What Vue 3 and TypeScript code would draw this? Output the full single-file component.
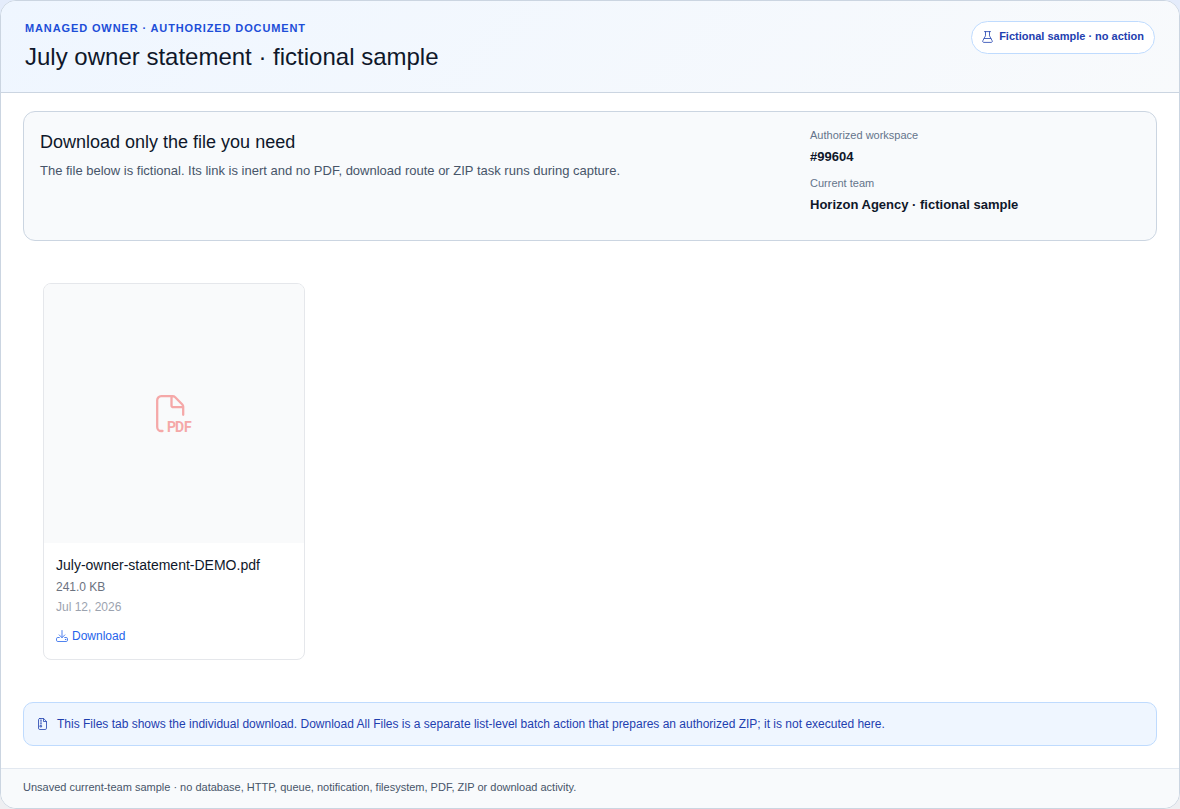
<script setup lang="ts">
interface OwnerFile {
  name: string
  size: string
  date: string
}

interface Detail {
  label: string
  value: string
}

const details: Detail[] = [
  { label: 'Authorized workspace', value: '#99604' },
  { label: 'Current team', value: 'Horizon Agency · fictional sample' },
]

const files: OwnerFile[] = [
  { name: 'July-owner-statement-DEMO.pdf', size: '241.0 KB', date: 'Jul 12, 2026' },
]
</script>

<template>
  <main class="shell">
    <header class="top">
      <div>
        <p class="eyebrow">Managed owner · Authorized document</p>
        <h1>July owner statement · fictional sample</h1>
      </div>
      <span class="badge">
        <svg class="badge-icon" viewBox="0 0 11 12" aria-hidden="true">
          <path d="M2.500 .6h6M3.500 .8v4L.9 9.600c-.6 1 .1 1.800 1 1.800h7.200c.9 0 1.600-.8 1-1.800L7.500 4.800v-4M2.200 7.500h6.600" />
        </svg>
        Fictional sample · no action
      </span>
    </header>

    <div class="content">
      <section class="summary">
        <div>
          <h2>Download only the file you need</h2>
          <p class="lead">The file below is fictional. Its link is inert and no PDF, download route or ZIP task runs during capture.</p>
        </div>
        <dl class="details">
          <template v-for="detail in details" :key="detail.label">
            <dt>{{ detail.label }}</dt>
            <dd>{{ detail.value }}</dd>
          </template>
        </dl>
      </section>

      <section class="files" aria-label="Files">
        <article v-for="file in files" :key="file.name" class="file">
          <div class="preview">
            <svg class="pdf-icon" viewBox="0 0 36 38" aria-hidden="true">
              <path d="M6.500 36H5.200a4 4 0 0 1-4-4V5.200a4 4 0 0 1 4-4h11.400c1 0 1.900.4 2.600 1.100l6.900 6.900c.7.7 1.100 1.600 1.100 2.600v8M15.500 1.400v8.800a2 2 0 0 0 2 2h9.300" />
              <text y="37"><tspan x="11">P</tspan><tspan x="19">D</tspan><tspan x="28">F</tspan></text>
            </svg>
          </div>
          <div class="info">
            <h3>{{ file.name }}</h3>
            <p class="size">{{ file.size }}</p>
            <p class="date">{{ file.date }}</p>
            <a class="download" href="#" @click.prevent>
              <svg class="download-icon" viewBox="0 0 12 12" aria-hidden="true">
                <path d="M6 .5v7M3.200 4.900 6 7.700l2.800-2.800M3.300 7.500H1.800C1 7.500.5 8 .5 8.700v1.600c0 .7.5 1.200 1.300 1.200h8.400c.8 0 1.300-.5 1.300-1.200V8.700c0-.7-.5-1.200-1.300-1.200H8.700" />
                <circle cx="9.500" cy="9.500" r=".2" />
              </svg>
              Download
            </a>
          </div>
        </article>
      </section>

      <p class="notice">
        <svg class="zip-icon" viewBox="0 0 9 12" aria-hidden="true">
          <path d="M1.800 .5h3.800L8.500 3.400v6.800c0 .8-.5 1.300-1.300 1.300H1.800C1 11.500.5 11 .5 10.200V1.800C.5 1 1 .5 1.800.5zM5.500 .7v2.800h2.800" />
          <path d="M2.300 2.200h1.300M2.300 4h1.300M2.300 5.800h1.300M2.300 7.600h1.300v1.300H2.300z" />
        </svg>
        This Files tab shows the individual download. Download All Files is a separate list-level batch action that prepares an authorized ZIP; it is not executed here.
      </p>
    </div>

    <footer class="foot">Unsaved current-team sample · no database, HTTP, queue, notification, filesystem, PDF, ZIP or download activity.</footer>
  </main>
</template>

<style>
body {
  margin: 0;
  background: linear-gradient(#e4ecfb, #eeeff2);
}
</style>

<style scoped>
* {
  box-sizing: border-box;
}

.shell {
  display: flex;
  flex-direction: column;
  min-height: 100vh;
  overflow: hidden;
  border: 1px solid #cbd5e1;
  border-radius: 16px;
  background: #fff;
  color: #0f172a;
  font-family: "Liberation Sans", Arial, sans-serif;
}

h1,
h2,
h3,
p,
dl,
dd {
  margin: 0;
  font-weight: 400;
}

svg {
  flex: none;
  fill: none;
  stroke: currentColor;
  stroke-linecap: round;
  stroke-linejoin: round;
  stroke-width: 0.8;
}

.top {
  display: flex;
  align-items: flex-start;
  justify-content: space-between;
  gap: 24px;
  padding: 20px 24px;
  border-bottom: 1px solid #cbd5e1;
  background: linear-gradient(135deg, #eff6ff, #f8fafc);
}

.eyebrow {
  color: #1d4ed8;
  font-size: 11px;
  font-weight: 700;
  line-height: 14px;
  letter-spacing: 0.08em;
  text-transform: uppercase;
}

h1 {
  margin-top: 7px;
  font-size: 24px;
  line-height: 30px;
}

.badge {
  display: flex;
  align-items: center;
  gap: 6px;
  padding: 7px 10px 9px;
  border: 1px solid #bfdbfe;
  border-radius: 20px;
  background: #fff;
  color: #1e40af;
  font-size: 11px;
  font-weight: 700;
  line-height: 15px;
  white-space: nowrap;
}

.badge-icon {
  width: 11px;
  height: 12px;
}

.content {
  flex: 1;
  padding: 18px 22px 22px;
}

.summary {
  display: grid;
  grid-template-columns: 7fr 3fr;
  min-height: 130px;
  padding: 15px 16px;
  border: 1px solid #cbd5e1;
  border-radius: 12px;
  background: #f8fafc;
}

h2 {
  margin-top: 4px;
  font-size: 18px;
  line-height: 22px;
}

.lead {
  margin-top: 8px;
  color: #475569;
  font-size: 13px;
  line-height: 20px;
}

dt {
  color: #64748b;
  font-size: 11px;
  line-height: 16px;
}

dd {
  margin: 4px 0 8px;
  font-size: 13px;
  font-weight: 700;
  line-height: 20px;
}

.files {
  display: grid;
  grid-template-columns: repeat(auto-fill, 262px);
  gap: 16px;
  padding: 42px 20px;
}

.file {
  overflow: hidden;
  border: 1px solid #e5e7eb;
  border-radius: 8px;
}

.preview {
  display: grid;
  place-items: center;
  height: 259px;
  background: #f9fafb;
}

.pdf-icon {
  width: 36px;
  height: 38px;
  color: #f5a8a8;
  stroke-width: 2.3;
  overflow: visible;
}

.pdf-icon text {
  fill: currentColor;
  stroke: none;
  font-family: "Liberation Sans Narrow", Roboto, sans-serif;
  font-size: 14px;
  font-weight: 700;
}

.info {
  padding: 12px 12px 13px;
}

h3 {
  font-size: 14px;
  line-height: 20px;
}

.size,
.date,
.download {
  font-size: 12px;
  line-height: 16px;
}

.size {
  margin-top: 4px;
  color: #6b7280;
}

.date {
  margin-top: 4px;
  color: #9ca3af;
}

.download {
  display: inline-flex;
  align-items: center;
  gap: 4px;
  margin-top: 13px;
  color: #2563eb;
  text-decoration: none;
}

.download-icon {
  width: 12px;
  height: 12px;
}

.notice {
  display: flex;
  align-items: center;
  gap: 10px;
  padding: 12px 14px;
  border: 1px solid #bfdbfe;
  border-radius: 10px;
  background: #eff6ff;
  color: #1e40af;
  font-size: 12px;
  line-height: 18px;
}

.zip-icon {
  width: 9px;
  height: 12px;
}

.foot {
  padding: 11px 22px 13px;
  border-top: 1px solid #e2e8f0;
  background: #f8fafc;
  color: #475569;
  font-size: 11px;
  line-height: 15px;
}
</style>
